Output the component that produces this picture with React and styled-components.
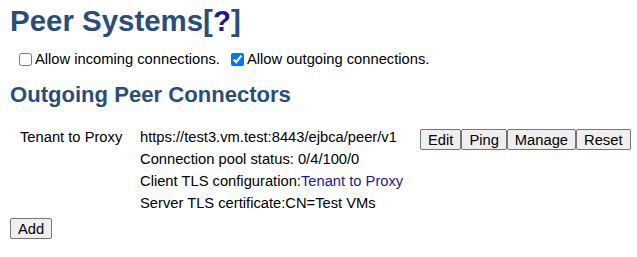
import React from "react";
import styled, { createGlobalStyle } from "styled-components";

const GlobalStyle = createGlobalStyle`
  html, body {
    margin: 0;
    padding: 0;
    background: #ffffff;
  }
  body {
    font-family: "Liberation Sans", Arial, sans-serif;
    font-size: 14.72px;
    color: #000000;
  }
`;

const TITLE = "#2a4e7c";

const Page = styled.div`
  padding: 3px 10px 0 10px;
`;

const Title = styled.h1`
  margin: 0;
  font-size: 29.44px;
  line-height: 36px;
  font-weight: bold;
  color: ${TITLE};
`;

const Help = styled.a`
  color: #1a1a9c;
  text-decoration: none;
`;

const Options = styled.div`
  display: flex;
  align-items: center;
  gap: 11px;
  margin: 11px 0 0 9px;
  height: 18px;
`;

const Option = styled.label`
  display: flex;
  align-items: center;
  gap: 3px;
`;

const Check = styled.input`
  margin: 0;
  width: 13px;
  height: 13px;
`;

const Heading = styled.h2`
  margin: 14px 0 0 0;
  font-size: 22.08px;
  line-height: 26px;
  font-weight: bold;
  color: ${TITLE};
`;

const ConnectorRow = styled.div`
  display: grid;
  grid-template-columns: 120px 280px auto;
  align-items: start;
  margin-top: 18px;
  padding-left: 10px;
`;

const Name = styled.div`
  line-height: 22px;
`;

const Details = styled.div`
  display: flex;
  flex-direction: column;
`;

const Line = styled.div`
  line-height: 22px;
  white-space: nowrap;
`;

const Link = styled.a`
  color: #1a1a9c;
  text-decoration: none;
`;

const Actions = styled.div`
  display: flex;
  gap: 0;
  margin-top: 3px;
`;

const Button = styled.button`
  font-family: "Liberation Sans", Arial, sans-serif;
  font-size: 14.72px;
  height: 21px;
  padding: 0 7px;
  background: #efefef;
  border: 1px solid #767676;
  border-radius: 2px;
  color: #000;
`;

const Footer = styled.div`
  margin-top: 4px;
`;

export default function App() {
  return (
    <>
      <GlobalStyle />
      <Page>
        <Title>
          Peer Systems[<Help href="#">?</Help>]
        </Title>
        <Options>
          <Option>
            <Check type="checkbox" />
            Allow incoming connections.
          </Option>
          <Option>
            <Check type="checkbox" defaultChecked />
            Allow outgoing connections.
          </Option>
        </Options>
        <Heading>Outgoing Peer Connectors</Heading>
        <ConnectorRow>
          <Name>Tenant to Proxy</Name>
          <Details>
            <Line>https://test3.vm.test:8443/ejbca/peer/v1</Line>
            <Line>Connection pool status: 0/4/100/0</Line>
            <Line>
              Client TLS configuration:<Link href="#">Tenant to Proxy</Link>
            </Line>
            <Line>Server TLS certificate:CN=Test VMs</Line>
          </Details>
          <Actions>
            <Button>Edit</Button>
            <Button>Ping</Button>
            <Button>Manage</Button>
            <Button>Reset</Button>
          </Actions>
        </ConnectorRow>
        <Footer>
          <Button>Add</Button>
        </Footer>
      </Page>
    </>
  );
}
